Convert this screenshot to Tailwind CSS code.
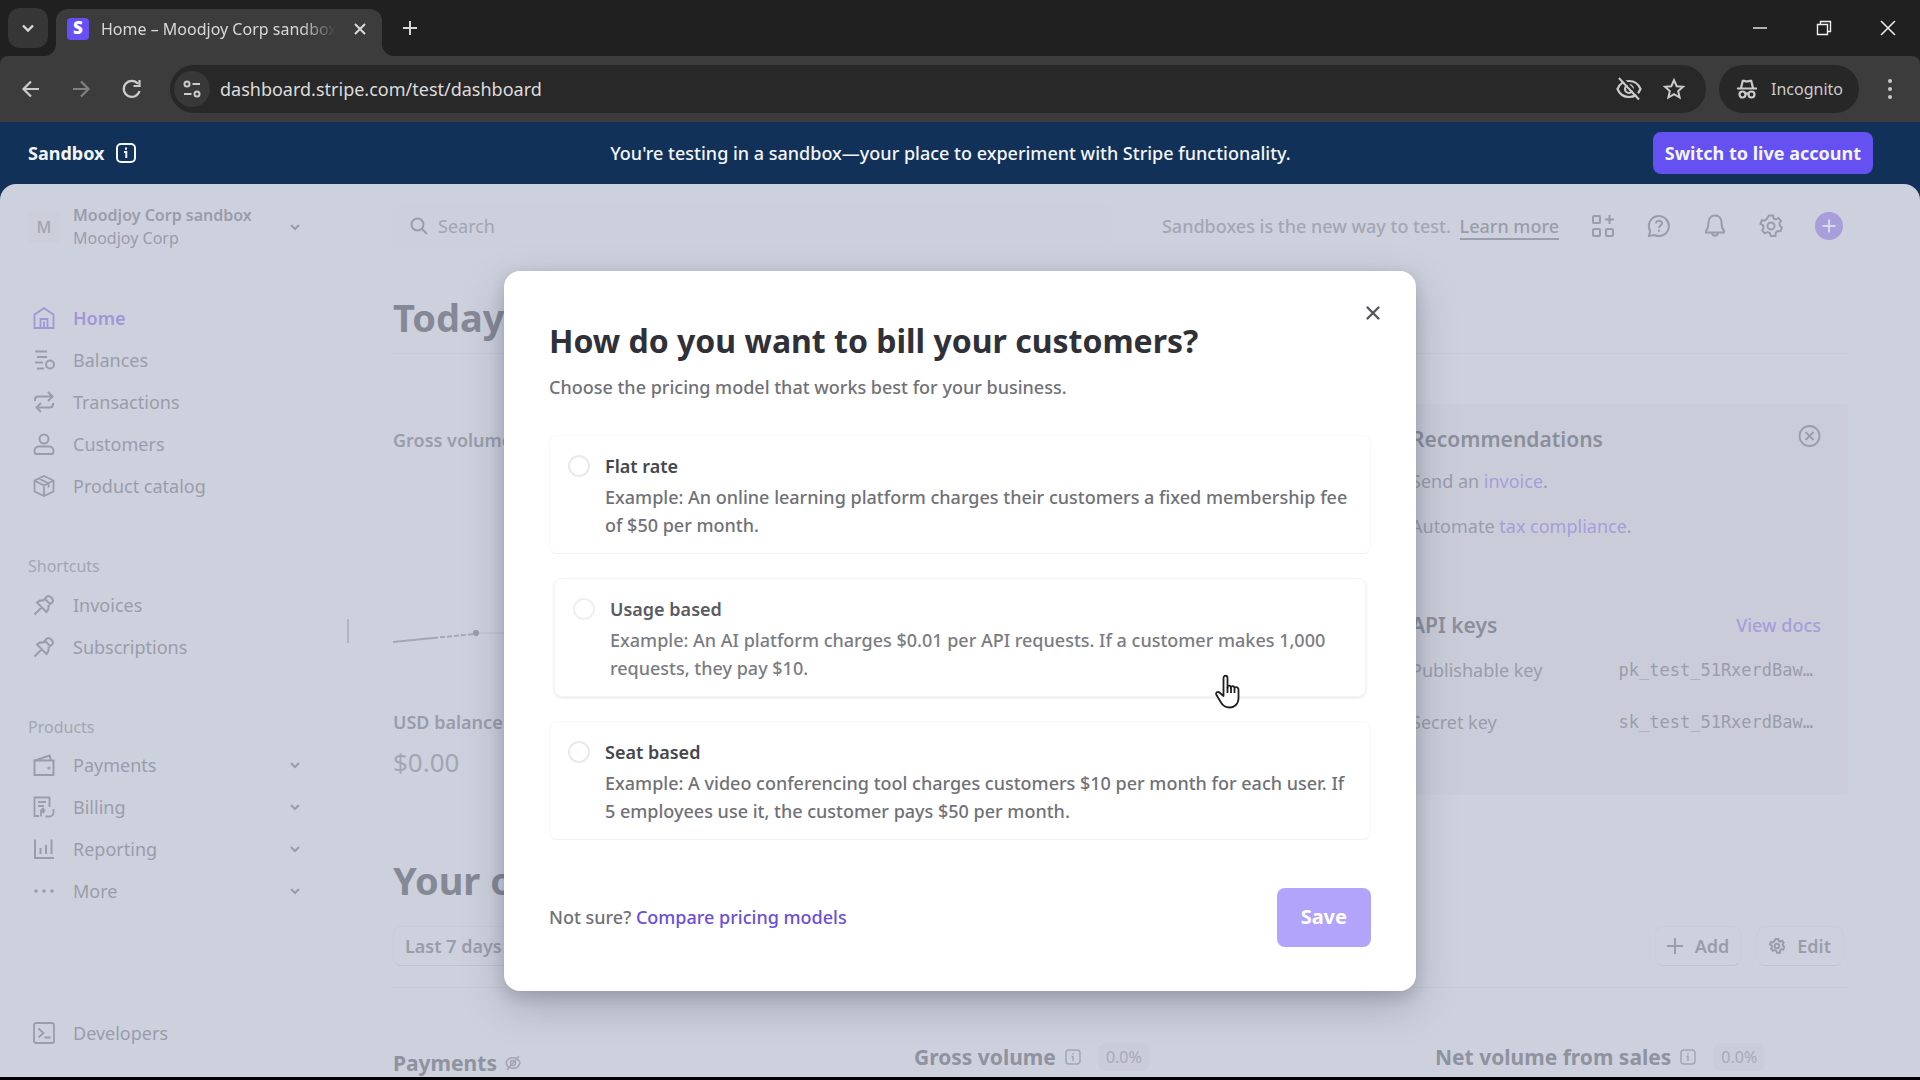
<!DOCTYPE html>
<html lang="en">
<head>
    <meta charset="UTF-8">
    <meta name="viewport" content="width=device-width, initial-scale=1.0">
    <title>Home – Moodjoy Corp sandbox</title>
    <script src="https://cdn.jsdelivr.net/npm/@tailwindcss/browser@4"></script>
</head>
<body class="h-screen flex flex-col overflow-hidden bg-[#123158] border-b-3 border-black font-['Noto_Sans','Open_Sans',sans-serif] text-[18px] leading-7">

    <!-- tab strip -->
    <div class="h-14 shrink-0 bg-[#202020] flex items-center text-[#d8d8d8]">
        <button aria-label="Search tabs" class="ml-2 size-10 rounded-xl bg-[#363636] flex items-center justify-center">
            <svg class="size-5" viewBox="0 0 20 20" fill="none" stroke="currentColor" stroke-width="2.4"><path d="M5 7.500l5 5 5-5"/></svg>
        </button>
        <div class="relative ml-2 w-[326px] h-[47px] self-end rounded-t-xl bg-[#3c3c3c] flex items-center pl-[11px] pr-[10px] pb-2">
            <svg class="absolute -left-3 bottom-0 size-3" viewBox="0 0 12 12" fill="#3c3c3c"><path d="M12 0v12H0A12 12 0 0 0 12 0z"/></svg>
            <svg class="absolute -right-3 bottom-0 size-3" viewBox="0 0 12 12" fill="#3c3c3c"><path d="M0 0v12h12A12 12 0 0 1 0 0z"/></svg>
            <span class="size-[22px] shrink-0 rounded-sm bg-[#6450f5] text-white text-[17px] leading-5 font-black text-center">S</span>
            <span class="ml-3 flex-1 overflow-hidden whitespace-nowrap text-[16px] mask-r-from-85% mask-r-to-100%">Home – Moodjoy Corp sandbox</span>
            <button aria-label="Close tab" class="ml-3 size-6 flex items-center justify-center">
                <svg class="size-4" viewBox="0 0 16 16" fill="none" stroke="currentColor" stroke-width="2"><path d="M3 3l10 10M13 3L3 13"/></svg>
            </button>
        </div>
        <button aria-label="New tab" class="ml-4 size-6 flex items-center justify-center">
            <svg class="size-4" viewBox="0 0 16 16" fill="none" stroke="currentColor" stroke-width="2"><path d="M8 1v14M1 8h14"/></svg>
        </button>
        <div class="ml-auto flex gap-12 pr-6 text-[#f0f0f0]">
            <button aria-label="Minimize"><svg class="size-4" viewBox="0 0 16 16" stroke="currentColor" stroke-width="1.4"><path d="M1 8h14"/></svg></button>
            <button aria-label="Restore"><svg class="size-4" viewBox="0 0 16 16" fill="none" stroke="currentColor" stroke-width="1.4"><path d="M1.500 4.500h10v10h-10zM4.500 4V1.500h10v10H12"/></svg></button>
            <button aria-label="Close"><svg class="size-4" viewBox="0 0 16 16" fill="none" stroke="currentColor" stroke-width="1.5"><path d="M1 1l14 14M15 1L1 15"/></svg></button>
        </div>
    </div>

    <!-- toolbar -->
    <div class="shrink-0 bg-[#202020]">
    <div class="h-[66px] rounded-t-lg bg-[#3c3c3c] flex items-center pl-[19px] pr-[18px] text-[#cbcbcb]">
        <button aria-label="Back"><svg class="size-6" viewBox="0 0 24 24" fill="none" stroke="currentColor" stroke-width="2.2"><path d="M20 12H4.500M12 4.500L4.500 12l7.500 7.500"/></svg></button>
        <button aria-label="Forward" class="ml-[26px] text-[#808080]"><svg class="size-6" viewBox="0 0 24 24" fill="none" stroke="currentColor" stroke-width="2.2"><path d="M4 12h15.500M12 4.500l7.500 7.500-7.500 7.500"/></svg></button>
        <button aria-label="Reload" class="ml-[27px]"><svg class="size-6" viewBox="0 0 24 24" fill="none" stroke="currentColor" stroke-width="2.2"><path d="M19.500 14a8 8 0 1 1-1.500-7.200M19.500 3v6h-6"/></svg></button>
        <div class="ml-[26px] flex-1 h-12 rounded-full bg-[#282828] flex items-center pl-1 pr-5">
            <button aria-label="Site information" class="size-9 rounded-full bg-[#383838] flex items-center justify-center">
                <svg class="size-6" viewBox="0 0 24 24" fill="none" stroke="currentColor" stroke-width="2"><circle cx="7" cy="7" r="2.500"/><path d="M12.500 7H20M4 17h7.500"/><circle cx="17" cy="17" r="2.500"/></svg>
            </button>
            <input aria-label="Address" value="dashboard.stripe.com/test/dashboard" class="ml-[10px] flex-1 bg-transparent outline-none text-[#dcdcdc]">
            <button aria-label="Third-party cookies blocked">
                <svg class="size-7" viewBox="0 0 28 28" fill="none" stroke="currentColor" stroke-width="2.2"><path d="M2.500 14C4.500 9 9 6 14 6s9.500 3 11.500 8c-2 5-6.500 8-11.500 8S4.500 19 2.500 14z"/><circle cx="14" cy="14" r="4"/><path d="M4 3l20 21.500"/><path d="M6.500 2.500l19 20" stroke="#282828"/></svg>
            </button>
            <button aria-label="Bookmark this tab" class="ml-[19px]">
                <svg class="size-6" viewBox="0 0 24 24" fill="none" stroke="currentColor" stroke-width="2"><path d="M12 3.200l2.700 6 6.300.6-4.800 4.300 1.400 6.400L12 17.200l-5.600 3.300 1.400-6.400L3 9.800l6.300-.6z"/></svg>
            </button>
        </div>
        <div class="ml-[13px] h-12 px-4 rounded-full bg-[#272727] flex items-center gap-3 text-[16px]">
            <svg class="size-6" viewBox="0 0 24 24" fill="none" stroke="currentColor" stroke-width="2.2"><path d="M2 11.500h20M6 11l1.800-7.200h1.700c1 .8 4 .8 5 0h1.700L18 11"/><circle cx="7.500" cy="17.500" r="3"/><circle cx="16.500" cy="17.500" r="3"/><path d="M10.500 17c1-.7 2-.7 3 0"/></svg>
            <span>Incognito</span>
        </div>
        <button aria-label="Menu" class="ml-[19px]"><svg class="size-6" viewBox="0 0 24 24" fill="currentColor"><circle cx="12" cy="4" r="2"/><circle cx="12" cy="12" r="2"/><circle cx="12" cy="20" r="2"/></svg></button>
    </div>
    </div>

    <!-- sandbox banner -->
    <div class="h-[62px] shrink-0 grid grid-cols-[1fr_auto_1fr] items-center pl-7 pr-[47px] text-[#f2f5fa]">
        <div class="flex items-center gap-3 font-bold">Sandbox
            <svg class="size-5" viewBox="0 0 20 20" fill="none" stroke="currentColor" stroke-width="2"><rect x="1" y="1" width="18" height="18" rx="4"/><path d="M8 9h2.300v6M10 4.500v2.200"/></svg>
        </div>
        <p class="font-medium">You're testing in a sandbox—your place to experiment with Stripe functionality.</p>
        <button class="justify-self-end h-[42px] px-3 rounded-lg bg-[#6550f2] font-bold">Switch to live account</button>
    </div>

    <!-- dashboard -->
    <div class="relative flex-1 min-h-0 rounded-t-2xl overflow-hidden bg-[#cdd1dd] text-[#999daa] flex">

        <aside class="w-[347px] shrink-0 flex flex-col pt-5 pb-[23px] pl-7">
            <button class="h-[46px] flex items-center text-left text-[16px]">
                <span class="size-8 rounded bg-[#cccfda] text-center leading-8 font-semibold text-[#a3a7b3]">M</span>
                <span class="ml-[13px] w-[214px]"><span class="block font-semibold leading-[23px]">Moodjoy Corp sandbox</span><span class="block leading-[23px]">Moodjoy Corp</span></span>
                <svg class="size-4" viewBox="0 0 16 16" fill="none" stroke="currentColor" stroke-width="2"><path d="M4 6l4 4 4-4"/></svg>
            </button>

            <nav class="mt-[47px] *:h-[42px] *:pl-[5px] *:flex *:items-center *:gap-[18px]">
                <a href="#" class="text-[#9f97d6] font-semibold"><svg class="size-[22px]" viewBox="0 0 22 22" fill="none" stroke="currentColor" stroke-width="1.8"><path d="M1.500 21V7.500L11 1.200l9.500 6.300V21zM7.500 21v-9h7v9M11 14.500V21"/></svg>Home</a>
                <a href="#"><svg class="size-[22px]" viewBox="0 0 22 22" fill="none" stroke="currentColor" stroke-width="2"><path d="M2 2.500h12M4 8h10M2 13.500h8M4 19.500h7"/><circle cx="17" cy="15.500" r="4"/></svg>Balances</a>
                <a href="#"><svg class="size-[22px]" viewBox="0 0 22 22" fill="none" stroke="currentColor" stroke-width="2"><path d="M2 10V8.500a3 3 0 0 1 3-3h14M15 1l4.500 4.500L15 10M20 12v1.500a3 3 0 0 1-3 3H4M8 12l-4.500 4.500L8 21"/></svg>Transactions</a>
                <a href="#"><svg class="size-[22px]" viewBox="0 0 22 22" fill="none" stroke="currentColor" stroke-width="2"><circle cx="11" cy="6" r="4.500"/><path d="M5.500 13.500h11c2.500 0 4 2.500 4 5 0 1.500-.8 2.500-2 2.500h-15c-1.200 0-2-1-2-2.500 0-2.500 1.500-5 4-5z"/></svg>Customers</a>
                <a href="#"><svg class="size-[22px]" viewBox="0 0 22 22" fill="none" stroke="currentColor" stroke-width="1.8"><path d="M11 1l9.500 4.500v11L11 21l-9.500-4.500v-11zM1.500 5.500L11 10.500l9.500-5M11 10.500V21M6 3.500l9.500 5v4"/></svg>Product catalog</a>
            </nav>

            <h3 class="mt-[47px] h-6 leading-6 text-[16px] text-[#a2a6b2]">Shortcuts</h3>
            <nav class="mt-[6px] *:h-[42px] *:pl-[5px] *:flex *:items-center *:gap-[18px]">
                <a href="#"><svg class="size-[22px]" viewBox="0 0 22 22" fill="none" stroke="currentColor" stroke-width="2"><path d="M14 2.500c2-2 7.500 3 5.500 5.500l-4 3.500c.5 3-.5 5-2 6.500L4 8.500c1.500-1.500 3.500-2.500 6.500-2zM8.500 13.500L1.500 20.500M12 5l5.500 5.500"/></svg>Invoices</a>
                <a href="#"><svg class="size-[22px]" viewBox="0 0 22 22" fill="none" stroke="currentColor" stroke-width="2"><path d="M14 2.500c2-2 7.500 3 5.500 5.500l-4 3.500c.5 3-.5 5-2 6.500L4 8.500c1.500-1.500 3.500-2.500 6.500-2zM8.500 13.500L1.500 20.500M12 5l5.500 5.500"/></svg>Subscriptions</a>
            </nav>

            <h3 class="mt-[47px] h-6 leading-6 text-[16px] text-[#a2a6b2]">Products</h3>
            <nav class="mt-[5px] pr-11 *:h-[42px] *:w-full *:pl-[5px] *:flex *:items-center *:gap-[18px]">
                <button><svg class="size-[22px]" viewBox="0 0 22 22" fill="none" stroke="currentColor" stroke-width="2"><path d="M1.500 6.500h19V21h-19zM2 6.500L16.500 1.500 18 6.500"/><circle cx="16" cy="14" r=".6"/></svg>Payments<svg class="ml-auto size-4" viewBox="0 0 16 16" fill="none" stroke="currentColor" stroke-width="2"><path d="M4 6l4 4 4-4"/></svg></button>
                <button><svg class="size-[22px]" viewBox="0 0 22 22" fill="none" stroke="currentColor" stroke-width="1.8"><path d="M6 20H1.500V1.500h15V11M5 6h8M5 10h6M8 14.500h4.500M11 12l-3 2.500 3 2.500M8 15v5.500M20.500 13v3.500c0 2.500-2 4-4 4h-4"/></svg>Billing<svg class="ml-auto size-4" viewBox="0 0 16 16" fill="none" stroke="currentColor" stroke-width="2"><path d="M4 6l4 4 4-4"/></svg></button>
                <button><svg class="size-[22px]" viewBox="0 0 22 22" fill="none" stroke="currentColor" stroke-width="2"><path d="M2 1.500V20h19M7.500 10v6M13 7v9M18.500 1.500V16"/></svg>Reporting<svg class="ml-auto size-4" viewBox="0 0 16 16" fill="none" stroke="currentColor" stroke-width="2"><path d="M4 6l4 4 4-4"/></svg></button>
                <button><svg class="size-[22px]" viewBox="0 0 22 22" fill="currentColor"><circle cx="3" cy="11" r="1.800"/><circle cx="11" cy="11" r="1.800"/><circle cx="19" cy="11" r="1.800"/></svg>More<svg class="ml-auto size-4" viewBox="0 0 16 16" fill="none" stroke="currentColor" stroke-width="2"><path d="M4 6l4 4 4-4"/></svg></button>
            </nav>

            <a href="#" class="mt-auto h-[42px] pl-[5px] flex items-center gap-[18px]"><svg class="size-[22px]" viewBox="0 0 22 22" fill="none" stroke="currentColor" stroke-width="1.8"><rect x="1" y="1" width="20" height="20" rx="2"/><path d="M5.500 6.500l5 4.500-5 4.500M11.500 15.500h6"/></svg>Developers</a>
        </aside>

        <div class="w-[2px] h-6 self-center bg-[#b2b6c3]"></div>

        <main class="flex-1 min-w-0 pl-11 pr-[72px]">
            <div class="mt-5 h-11 flex items-center">
                <label class="w-[720px] h-11 rounded-lg bg-[#cccfdc] flex items-center pl-[17px] gap-[10px]">
                    <svg class="size-[18px]" viewBox="0 0 18 18" fill="none" stroke="currentColor" stroke-width="2"><circle cx="7.500" cy="7.500" r="6"/><path d="M12 12l5 5"/></svg>
                    <input type="search" placeholder="Search" class="flex-1 bg-transparent outline-none placeholder:text-[#a2a6b3]">
                </label>
                <p class="ml-auto font-medium text-[#a3a7b3]">Sandboxes is the new way to test. <a href="#" class="ml-1 border-b-2 border-[#9b9fac] text-[#999daa]">Learn more</a></p>
                <div class="ml-8 pr-[5px] flex items-center gap-8">
                    <button aria-label="Apps"><svg class="size-6" viewBox="0 0 24 24" fill="none" stroke="currentColor" stroke-width="2"><rect x="2" y="2" width="7" height="7" rx="1"/><rect x="2" y="15" width="7" height="7" rx="1"/><rect x="15" y="15" width="7" height="7" rx="1"/><path d="M18.500 1v9M14 5.500h9"/></svg></button>
                    <button aria-label="Help"><svg class="size-6" viewBox="0 0 24 24" fill="none" stroke="currentColor" stroke-width="2"><path d="M2 22l1.200-5A10 10 0 1 1 7.500 21z"/><path d="M9 9.500c0-4 6.500-3.500 6 0-.3 2-3 2-3 4.500M12 15.500v2.200"/></svg></button>
                    <button aria-label="Notifications"><svg class="size-6" viewBox="0 0 24 24" fill="none" stroke="currentColor" stroke-width="2"><path d="M12 1.500c4 0 6.500 3 6.500 7 0 4.500.8 6.500 2.500 8.500v1.500H3V17c1.700-2 2.500-4 2.500-8.500 0-4 2.500-7 6.500-7zM9 19c.5 3.500 5.500 3.500 6 0"/></svg></button>
                    <button aria-label="Settings"><svg class="size-6" viewBox="0 0 24 24" fill="none" stroke="currentColor" stroke-width="2"><path d="M10 1.500h4l.7 3 2.200 1 2.600-1.500 2.500 3-1.600 2.500.6 2.500 2 1.500-1.500 3.700-3-.2-1.800 1.700-.2 3.300h-4.500l-1.200-3-2.300-.9-2.700 1.200-2.600-2.900 1.500-2.700-.6-2.300L1.500 9.800l1.300-3.600 3.100.3 1.900-1.600z"/><circle cx="12" cy="12" r="3.500"/></svg></button>
                    <button aria-label="Create" class="size-7 rounded-full bg-[#a79edb] text-[#d8d9ea] flex items-center justify-center"><svg class="size-4" viewBox="0 0 16 16" fill="none" stroke="currentColor" stroke-width="2"><path d="M8 1.500v13M1.500 8h13"/></svg></button>
                </div>
            </div>

            <h1 class="mt-[45px] pb-3 text-[38px] leading-12 font-bold text-[#858996] border-b border-[#c7cbd7]">Today</h1>

            <div class="mt-[50px] flex justify-between">
                <section class="w-[920px] pt-[22px] font-semibold">
                    <h3>Gross volume</h3>
                    <svg class="mt-[166px] w-[920px] h-[30px]" viewBox="0 0 920 30" fill="none" stroke="#a4a8b4" stroke-width="2"><path d="M0 22L40 18"/><path d="M40 18L82 14" stroke-dasharray="5 2"/><path d="M86 13H920" stroke="#bcc0cc" stroke-width="1"/><circle cx="83" cy="13" r="3" fill="#989ca9" stroke="none"/></svg>
                    <h3 class="mt-[58px]">USD balance</h3>
                    <p class="mt-2 text-[26px] leading-9 font-normal text-[#a2a6b2]">$0.00</p>
                </section>

                <section class="w-[463px] pt-[21px] pb-[59px] pl-[26px] pr-[27px] rounded bg-[#cacdd9]">
                    <div class="flex justify-between">
                        <h2 class="text-[21px] font-semibold text-[#8b8f9c]">Recommendations</h2>
                        <button aria-label="Dismiss" class="size-6"><svg class="size-6" viewBox="0 0 24 24" fill="none" stroke="currentColor" stroke-width="1.8"><circle cx="12.500" cy="11" r="10"/><path d="M8.500 7l8 8M16.500 7l-8 8"/></svg></button>
                    </div>
                    <p class="mt-[14px]">Send an <a href="#" class="text-[#a59edb]">invoice</a>.</p>
                    <p class="mt-[17px]">Automate <a href="#" class="text-[#a59edb]">tax compliance</a>.</p>
                    <div class="mt-[71px] flex justify-between">
                        <h2 class="text-[21px] font-semibold text-[#8b8f9c]">API keys</h2>
                        <a href="#" class="text-[#a59edb] font-medium">View docs</a>
                    </div>
                    <div class="mt-[17px] pr-2 flex justify-between"><span>Publishable key</span><code class="font-['DejaVu_Sans_Mono',monospace] text-[17px]">pk_test_51RxerdBaw…</code></div>
                    <div class="mt-6 pr-2 flex justify-between"><span>Secret key</span><code class="font-['DejaVu_Sans_Mono',monospace] text-[17px]">sk_test_51RxerdBaw…</code></div>
                </section>
            </div>

            <h1 class="mt-[61px] text-[38px] leading-12 font-bold text-[#858996]">Your overview</h1>
            <div class="mt-[22px] pb-[21px] pr-[5px] flex gap-4 font-semibold border-b border-[#c7cbd7] *:h-10 *:px-[11px] *:rounded-lg *:border *:border-[#c9cdd9] *:border-b-[#c0c4d0] *:flex *:items-center">
                <button>Last 7 days</button>
                <button class="ml-auto gap-3"><svg class="size-4" viewBox="0 0 16 16" fill="none" stroke="currentColor" stroke-width="2"><path d="M8 0v16M0 8h16"/></svg>Add</button>
                <button class="gap-3"><svg class="size-4" viewBox="0 0 24 24" fill="none" stroke="currentColor" stroke-width="3"><path d="M10 1.500h4l.7 3 2.200 1 2.600-1.500 2.500 3-1.600 2.500.6 2.500 2 1.500-1.500 3.700-3-.2-1.800 1.700-.2 3.300h-4.500l-1.200-3-2.300-.9-2.700 1.200-2.600-2.900 1.500-2.700-.6-2.300L1.500 9.800l1.300-3.600 3.100.3 1.900-1.600z"/><circle cx="12" cy="12" r="3.500"/></svg>Edit</button>
            </div>

            <div class="mt-[55px] grid grid-cols-3 gap-x-[108px] text-[21px] font-bold text-[#8f93a0]">
                <h2 class="pt-[6px] flex items-center gap-2">Payments
                    <svg class="size-4" viewBox="0 0 16 16" fill="none" stroke="#a2a6b2" stroke-width="1.5"><path d="M1 8c2-7 12-7 14 0-2 7-12 7-14 0zM2 15L14 1"/><circle cx="8" cy="8" r="2.500"/></svg>
                </h2>
                <h2 class="h-7 flex items-center gap-[9px] whitespace-nowrap">Gross volume
                    <svg class="size-4" viewBox="0 0 16 16" fill="none" stroke="#a2a6b2" stroke-width="1.5"><rect x="1" y="1" width="14" height="14" rx="3"/><path d="M8 4v1.500M6.500 7.500H8V12"/></svg>
                    <span class="ml-2 px-2 rounded-lg bg-[#cacdd9] text-[16px] font-normal text-[#a6aab6]">0.0%</span>
                </h2>
                <h2 class="h-7 flex items-center gap-[9px] whitespace-nowrap">Net volume from sales
                    <svg class="size-4" viewBox="0 0 16 16" fill="none" stroke="#a2a6b2" stroke-width="1.5"><rect x="1" y="1" width="14" height="14" rx="3"/><path d="M8 4v1.500M6.500 7.500H8V12"/></svg>
                    <span class="ml-2 px-2 rounded-lg bg-[#cacdd9] text-[16px] font-normal text-[#a6aab6]">0.0%</span>
                </h2>
            </div>
        </main>

        <!-- billing dialog -->
        <div class="absolute inset-0 flex items-center justify-center">
            <form role="dialog" aria-labelledby="dialog-title" class="relative w-full max-w-[912px] pt-[50px] pb-11 px-[45px] rounded-2xl bg-white shadow-[0_15px_40px_rgba(60,64,85,0.28),0_5px_15px_rgba(0,0,0,0.14)] text-[#707178] font-medium">
                <button type="button" aria-label="Close" class="absolute top-[30px] right-[31px] size-6 flex items-center justify-center text-[#55565e]">
                    <svg class="size-4" viewBox="0 0 16 16" fill="none" stroke="currentColor" stroke-width="2.4" stroke-linecap="round"><path d="M2.500 2.500l11 11M13.500 2.500l-11 11"/></svg>
                </button>
                <h2 id="dialog-title" class="text-[32px] leading-10 font-bold text-[#303138]">How do you want to bill your customers?</h2>
                <p class="mt-3">Choose the pricing model that works best for your business.</p>

                <div class="mt-[34px] flex flex-col gap-6">
                    <label class="flex items-start gap-[15px] pt-4 pb-[14px] pl-[18px] pr-3 rounded-lg border border-[#f7f7f9] border-b-[#f1f1f4]">
                        <input type="radio" name="model" class="mt-[3px] size-[22px] shrink-0 appearance-none rounded-full border-2 border-[#e9eaee]">
                        <span><span class="block font-semibold text-[#45464e]">Flat rate</span><span class="block mt-[3px]">Example: An online learning platform charges their customers a fixed membership fee of $50 per month.</span></span>
                    </label>
                    <label class="mx-[5px] flex items-start gap-[15px] pt-4 pb-[14px] pl-[18px] pr-3 rounded-lg border border-[#f4f4f6] shadow-[0_1px_3px_rgba(0,0,0,0.1)] text-[#7b7c83]">
                        <input type="radio" name="model" class="mt-[3px] size-[22px] shrink-0 appearance-none rounded-full border-2 border-[#eeeff2]">
                        <span><span class="block font-semibold text-[#5a5b63]">Usage based</span><span class="block mt-[3px]">Example: An AI platform charges $0.01 per API requests. If a customer makes 1,000 requests, they pay $10.</span></span>
                    </label>
                    <label class="flex items-start gap-[15px] pt-4 pb-[14px] pl-[18px] pr-3 rounded-lg border border-[#f7f7f9] border-b-[#f1f1f4]">
                        <input type="radio" name="model" class="mt-[3px] size-[22px] shrink-0 appearance-none rounded-full border-2 border-[#e9eaee]">
                        <span><span class="block font-semibold text-[#45464e]">Seat based</span><span class="block mt-[3px]">Example: A video conferencing tool charges customers $10 per month for each user. If 5 employees use it, the customer pays $50 per month.</span></span>
                    </label>
                </div>

                <div class="mt-12 flex items-center justify-between">
                    <p>Not sure? <a href="#" class="text-[#6a4edb]">Compare pricing models</a></p>
                    <button type="submit" class="h-[59px] px-6 rounded-lg bg-[#b2a4fa] text-white text-[20px] font-bold">Save</button>
                </div>

                <!-- mouse pointer -->
                <svg class="absolute left-[710px] top-[403px] w-7 h-9" viewBox="0 0 28 36" fill="#fff" stroke="#222" stroke-width="1.8" stroke-linejoin="round"><path d="M9.500 22V4c0-3 4-3 4 0v9.500c0-2.500 3.500-2.500 3.500.5 0-2.500 3.500-2.500 3.500.5 0-2 4-2 4 1.500v8c0 6-4 9.500-9 9.500-4 0-6.500-1.500-8.500-5l-4.500-7.500c-1.500-2.500 1.500-4 3.500-2z"/><path d="M13.500 13v6M17 14v5M20.500 15v4" fill="none"/></svg>
            </form>
        </div>
    </div>

</body>
</html>
